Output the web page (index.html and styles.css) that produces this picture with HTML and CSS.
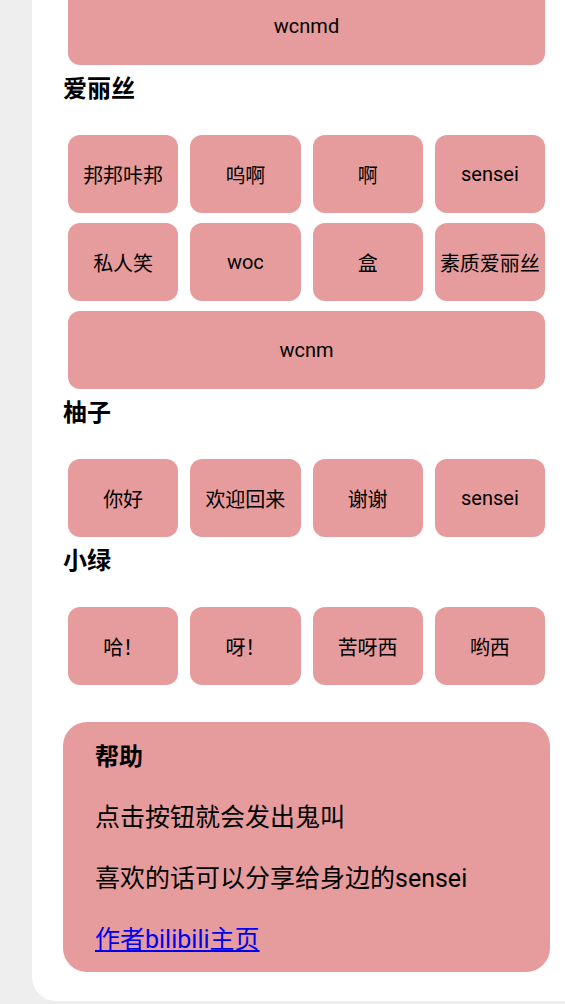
FILE: index.html
```html
<!DOCTYPE html>
<html lang="zh-CN">
<head>
  <meta charset="UTF-8">
  <meta name="viewport" content="width=device-width, initial-scale=1.0">
  <title>sensei 按钮</title>
  <link rel="stylesheet" href="styles.css">
</head>
<body>
  <div class="panel">
    <div class="btn-grid">
      <button class="voice-btn wide">wcnmd</button>
    </div>

    <h2>爱丽丝</h2>
    <div class="btn-grid">
      <button class="voice-btn">邦邦咔邦</button>
      <button class="voice-btn">呜啊</button>
      <button class="voice-btn">啊</button>
      <button class="voice-btn">sensei</button>
      <button class="voice-btn">私人笑</button>
      <button class="voice-btn">woc</button>
      <button class="voice-btn">盒</button>
      <button class="voice-btn">素质爱丽丝</button>
      <button class="voice-btn wide">wcnm</button>
    </div>

    <h2>柚子</h2>
    <div class="btn-grid">
      <button class="voice-btn">你好</button>
      <button class="voice-btn">欢迎回来</button>
      <button class="voice-btn">谢谢</button>
      <button class="voice-btn">sensei</button>
    </div>

    <h2>小绿</h2>
    <div class="btn-grid">
      <button class="voice-btn">哈！</button>
      <button class="voice-btn">呀！</button>
      <button class="voice-btn">苦呀西</button>
      <button class="voice-btn">哟西</button>
    </div>

    <div class="help">
      <h3>帮助</h3>
      <p>点击按钮就会发出鬼叫</p>
      <p>喜欢的话可以分享给身边的sensei</p>
      <p><a href="#">作者bilibili主页</a></p>
    </div>
  </div>
</body>
</html>
```

FILE: styles.css
```css
html {
  background-color: #eeeeee;
}
body {
  margin: 0;
  padding: 0;
  font-family: Roboto, "Noto Sans CJK SC", sans-serif;
  color: #000;
  overflow: hidden;
}
.panel {
  background-color: #fff;
  margin: -13px 0 0 32px;
  padding: 0 16px 29px 32px;
  border-bottom-left-radius: 24px;
}
.btn-grid {
  display: grid;
  grid-template-columns: repeat(4, 1fr);
  column-gap: 12px;
  row-gap: 10px;
  padding: 0 4px;
}
.voice-btn {
  height: 78px;
  padding: 0;
  background-color: #e69c9c;
  border: none;
  border-radius: 12px;
  font-family: Roboto, "Noto Sans CJK SC", sans-serif;
  font-size: 20px;
  color: #000;
  white-space: nowrap;
  cursor: pointer;
}
.voice-btn.wide {
  grid-column: 1 / -1;
}
h2 {
  font-size: 24px;
  line-height: 26px;
  font-weight: bold;
  margin: 11px 0 0 -1px;
  height: 26px;
  padding-bottom: 33px;
}
.help {
  background-color: #e69c9c;
  border-radius: 24px;
  margin: 37px -1px 0;
  padding: 20px 32px 17px;
}
.help h3,
.help p {
  font-size: 24px;
  line-height: 30px;
  margin: 0;
}
.help h3 {
  font-weight: bold;
}
.help p {
  font-size: 25px;
  margin-top: 31px;
}
.help a {
  color: #0000ee;
}
```
